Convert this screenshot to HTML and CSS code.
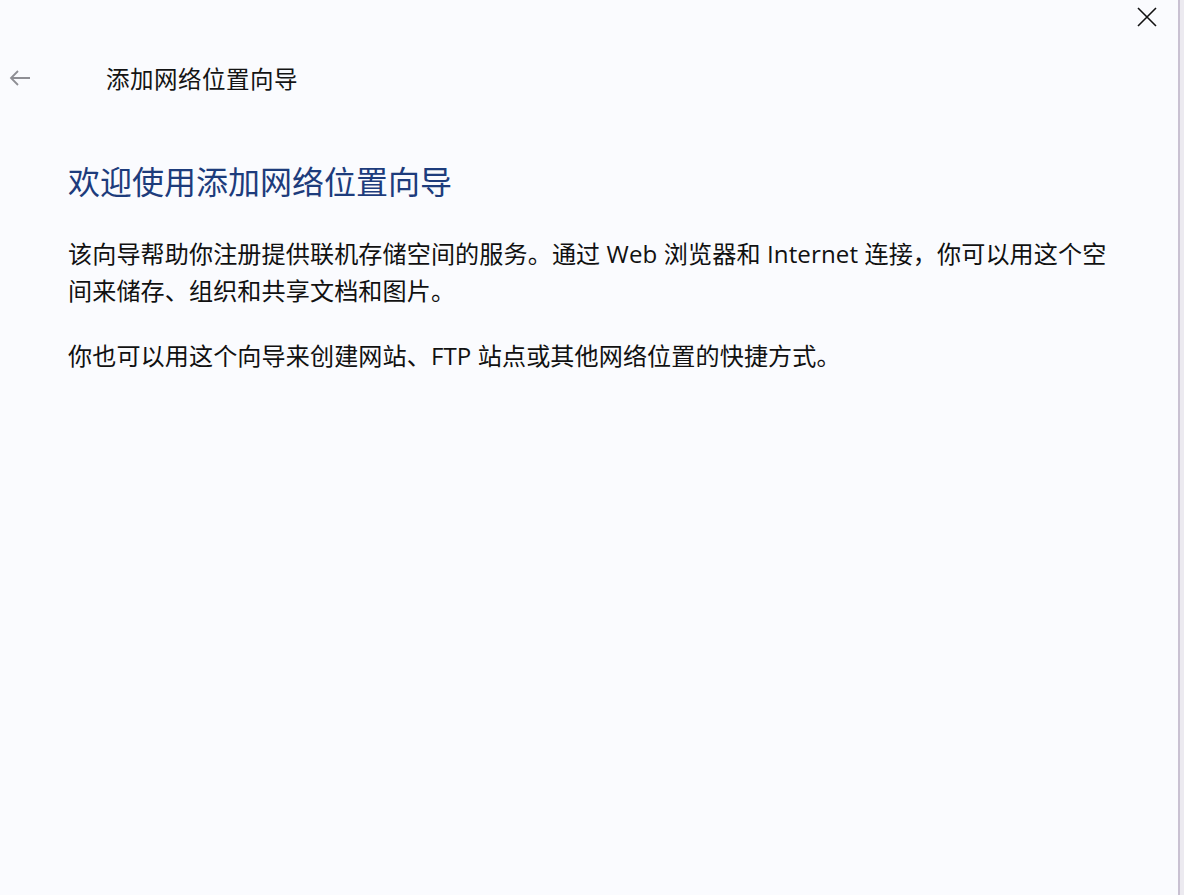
FILE: index.html
```html
<!DOCTYPE html>
<html lang="zh-CN">
<head>
<meta charset="utf-8">
<title>添加网络位置向导</title>
<link rel="stylesheet" href="styles.css">
</head>
<body>
<div class="screen">
  <div class="window">
    <div class="titlebar">
      <span class="close" aria-label="关闭">
        <svg width="20" height="20" viewBox="0 0 20 20"><path d="M1 1L19 19M19 1L1 19" stroke="#111" stroke-width="1.6" fill="none"/></svg>
      </span>
    </div>
    <div class="nav">
      <span class="back" aria-label="返回">
        <svg width="22" height="16" viewBox="0 0 22 16"><path d="M21 8H2M9 1L2 8L9 15" stroke="#8e8e94" stroke-width="1.8" fill="none"/></svg>
      </span>
      <span class="nav-title">添加网络位置向导</span>
    </div>
    <div class="content">
      <h1 class="heading">欢迎使用添加网络位置向导</h1>
      <p class="para">该向导帮助你注册提供联机存储空间的服务。通过 Web 浏览器和 Internet 连接，你可以用这个空间来储存、组织和共享文档和图片。</p>
      <p class="para">你也可以用这个向导来创建网站、FTP 站点或其他网络位置的快捷方式。</p>
    </div>
  </div>
  <div class="behind"></div>
</div>
</body>
</html>
```

FILE: styles.css
```css
html, body {
  margin: 0;
  padding: 0;
  background: #fafbfe;
}
body {
  font-family: "Open Sans", "Noto Sans CJK SC", sans-serif;
  color: #111;
}
.screen {
  display: flex;
  width: 1184px;
  height: 895px;
  overflow: hidden;
}
.window {
  width: 1180px;
  height: 895px;
  box-sizing: border-box;
  border-right: 2px solid #c9c1d2;
  background: #fafbfe;
  display: flex;
  flex-direction: column;
}
.behind {
  flex: 1;
  background: #eceaf0;
}
.titlebar {
  height: 40px;
  display: flex;
  justify-content: flex-end;
  align-items: flex-start;
  padding: 7px 21px 0 0;
  box-sizing: border-box;
}
.close {
  display: block;
  width: 20px;
  height: 20px;
}
.close svg, .back svg { display: block; }
.nav {
  display: flex;
  align-items: center;
  height: 76px;
  padding-left: 9px;
  box-sizing: border-box;
}
.back {
  width: 22px;
  height: 16px;
  margin-right: 75px;
}
.nav-title {
  font-family: "Noto Sans CJK SC", sans-serif;
  font-size: 23.5px;
  color: #141414;
  letter-spacing: 0.5px;
  margin-top: -1px;
}
.content {
  padding-left: 68px;
}
.heading {
  margin: 42px 0 0 0;
  font-family: "Noto Sans CJK SC", sans-serif;
  font-weight: 400;
  font-size: 32px;
  line-height: 44px;
  color: #1d3c7c;
}
.para {
  margin: 0;
  font-family: "Open Sans", "Noto Sans CJK SC", sans-serif;
  font-size: 24.1px;
  line-height: 37px;
  color: #111;
  max-width: 1050px;
  letter-spacing: 0.1px;
}
.heading + .para {
  margin-top: 33px;
}
.para + .para {
  margin-top: 28px;
}
```
